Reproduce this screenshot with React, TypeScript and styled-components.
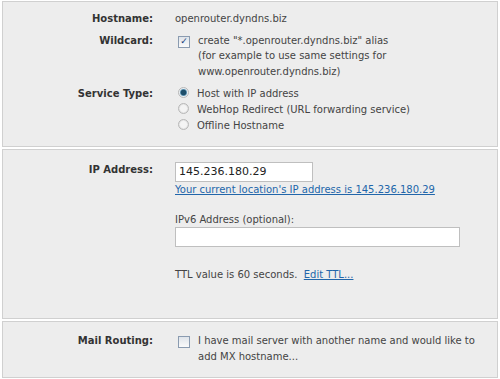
import styled, { createGlobalStyle } from "styled-components";

const Global = createGlobalStyle`
  html, body {
    margin: 0;
    padding: 0;
    background: #fff;
  }
  body {
    font-family: "DejaVu Sans", Tahoma, sans-serif;
    font-size: 10px;
    color: #444;
  }
`;

const Page = styled.div`
  width: 500px;
  height: 379px;
  background: #fff;
  padding: 1px 2px 0 2px;
  box-sizing: border-box;
  display: flex;
  flex-direction: column;
  gap: 2px;
`;

const Panel = styled.section<{ $h: number; $pt: number }>`
  height: ${(p) => p.$h}px;
  box-sizing: border-box;
  background: #ededed;
  border: 1px solid #d0d0d0;
  padding: ${(p) => p.$pt}px 0 0 0;
`;

const Row = styled.div<{ $mt?: number }>`
  display: grid;
  grid-template-columns: 150px 1fr;
  column-gap: 22px;
  margin-top: ${(p) => p.$mt ?? 0}px;
  line-height: 15.5px;
`;

const Label = styled.div`
  text-align: right;
  font-weight: bold;
  color: #333;
`;

const Value = styled.div`
  color: #444;
`;

const CheckLine = styled.label`
  display: flex;
  gap: 8px;
  align-items: flex-start;
`;

const Box = styled.span<{ $on?: boolean }>`
  flex: none;
  width: 10px;
  height: 10px;
  margin-top: 3px;
  margin-left: 3px;
  border: 1px solid #8a9bb0;
  background: linear-gradient(#dfe4ea, #fafafa);
  display: flex;
  align-items: center;
  justify-content: center;
  color: #203a78;
  font-size: 9px;
  line-height: 1;
`;

const RadioList = styled.div`
  display: flex;
  flex-direction: column;
  line-height: 16px;
`;

const Radio = styled.span<{ $on?: boolean }>`
  display: inline-block;
  width: 9px;
  height: 9px;
  border-radius: 50%;
  border: 1px solid #b8b8b8;
  background: ${(p) =>
    p.$on
      ? "radial-gradient(circle, #1d4e6a 0 2.5px, #6ea0bc 3.2px, #e8eef2 4px)"
      : "radial-gradient(circle, #f4f4f4 0 3px, #dcdcdc 5px)"};
  margin: 0 8px 0 3px;
  vertical-align: -1px;
`;

const Input = styled.div<{ $w: number }>`
  width: ${(p) => p.$w}px;
  height: 20px;
  box-sizing: border-box;
  background: #fff;
  border: 1px solid #bfbfbf;
  padding: 0 3px;
  font-size: 11px;
  line-height: 18px;
  color: #222;
`;

const Link = styled.a<{ $inline?: boolean }>`
  color: #2266aa;
  text-decoration: underline;
  display: ${(p) => (p.$inline ? "inline" : "block")};
`;

const Stack = styled.div`
  display: flex;
  flex-direction: column;
`;

const Caption = styled.span<{ $mt: number }>`
  margin-top: ${(p) => p.$mt}px;
`;

export default function App() {
  return (
    <>
      <Global />
      <Page>
        <Panel $h={146} $pt={9}>
          <Row>
            <Label>Hostname:</Label>
            <Value>openrouter.dyndns.biz</Value>
          </Row>
          <Row $mt={6}>
            <Label>Wildcard:</Label>
            <CheckLine>
              <Box $on>✓</Box>
              <span>
                create "*.openrouter.dyndns.biz" alias
                <br />
                (for example to use same settings for
                <br />
                www.openrouter.dyndns.biz)
              </span>
            </CheckLine>
          </Row>
          <Row $mt={7}>
            <Label>Service Type:</Label>
            <RadioList>
              <span>
                <Radio $on />
                Host with IP address
              </span>
              <span>
                <Radio />
                WebHop Redirect (URL forwarding service)
              </span>
              <span>
                <Radio />
                Offline Hostname
              </span>
            </RadioList>
          </Row>
        </Panel>

        <Panel $h={170} $pt={12}>
          <Row>
            <Label>IP Address:</Label>
            <Stack>
              <Input $w={138}>145.236.180.29</Input>
              <Link>Your current location's IP address is 145.236.180.29</Link>
              <Caption $mt={14}>IPv6 Address (optional):</Caption>
              <Input $w={285} />
              <Caption $mt={20}>
                TTL value is 60 seconds.&nbsp;&nbsp;
                <Link $inline>Edit TTL...</Link>
              </Caption>
            </Stack>
          </Row>
        </Panel>

        <Panel $h={57} $pt={11}>
          <Row>
            <Label>Mail Routing:</Label>
            <CheckLine>
              <Box />
              <span>
                I have mail server with another name and would like to
                <br />
                add MX hostname...
              </span>
            </CheckLine>
          </Row>
        </Panel>
      </Page>
    </>
  );
}
